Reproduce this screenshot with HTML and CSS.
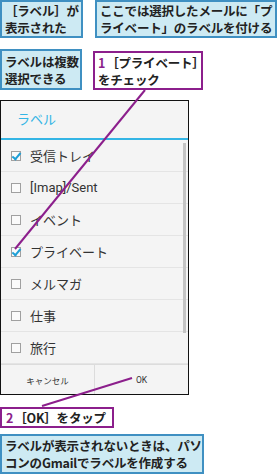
FILE: index.html
```html
<!DOCTYPE html>
<html lang="ja">
<head>
    <meta charset="UTF-8">
    <meta name="viewport" content="width=device-width, initial-scale=1.0">
    <title>ラベルを付ける</title>
    <link rel="stylesheet" href="styles.css">
</head>
<body>
    <div class="page">
        <div class="callout-row top-row">
            <div class="note note-blue note-a">［ラベル］が<br>表示された</div>
            <div class="note note-blue note-b">ここでは選択したメールに「プ<br>ライベート」のラベルを付ける</div>
        </div>

        <div class="callout-row second-row">
            <div class="note note-blue note-c">ラベルは複数<br>選択できる</div>
            <div class="note note-purple note-d"><span class="step">1</span>［プライベート］<br>をチェック</div>
        </div>

        <!-- phone screenshot -->
        <div class="dialog">
            <div class="dialog-title">ラベル</div>
            <div class="dialog-list">
                <div class="row"><span class="box checked"></span>受信トレイ</div>
                <div class="row"><span class="box"></span>[Imap]/Sent</div>
                <div class="row"><span class="box"></span>イベント</div>
                <div class="row"><span class="box checked"></span>プライベート</div>
                <div class="row"><span class="box"></span>メルマガ</div>
                <div class="row"><span class="box"></span>仕事</div>
                <div class="row"><span class="box"></span>旅行</div>
                <div class="scrollbar"></div>
            </div>
            <div class="dialog-buttons">
                <div class="btn">キャンセル</div>
                <div class="btn">OK</div>
            </div>
        </div>

        <div class="note note-purple note-e"><span class="step">2</span>［OK］をタップ</div>
        <div class="note note-blue note-f">ラベルが表示されないときは、パソ<br>コンのGmailでラベルを作成する</div>

        <svg class="leaders" width="277" height="475" viewBox="0 0 277 475">
            <line x1="145" y1="90" x2="15" y2="249" />
            <line x1="42" y1="406" x2="132" y2="378" />
        </svg>
    </div>
</body>
</html>
```

FILE: styles.css
```css
body {
    margin: 0;
    padding: 0;
    background: #fff;
    font-family: "Noto Sans CJK JP", "Noto Sans", sans-serif;
    color: #222;
}

.page {
    position: relative;
    width: 277px;
    height: 475px;
    overflow: hidden;
}

/* Callouts */
.callout-row {
    display: flex;
    align-items: flex-start;
}

.top-row {
    gap: 12px;
}

.second-row {
    margin-top: 11px;
    gap: 11px;
}

.note {
    box-sizing: border-box;
    font-size: 12.5px;
    font-weight: bold;
    line-height: 17px;
    white-space: nowrap;
    letter-spacing: -0.2px;
}

.note-blue {
    background-color: #cdeaf3;
    border: 2px solid #3f90c2;
    padding: 0 3px;
}

.note-purple {
    background-color: #fff;
    border: 2px solid #8c1f8c;
    padding: 0 3px;
}

.step {
    color: #8c1f8c;
    margin-right: 1px;
}

.note-a {
    width: 83px;
    height: 38px;
}

.note-b {
    width: 182px;
    height: 38px;
}

.note-c {
    width: 82px;
    height: 41px;
    padding-top: 2px;
}

.note-d {
    width: 110px;
    height: 39px;
    margin-top: 2px;
    padding-top: 1px;
}

.note-e {
    width: 114px;
    height: 21px;
    margin-top: 12px;
    padding: 0 4px;
}

.note-f {
    width: 204px;
    height: 40px;
    margin-top: 6px;
    padding-top: 1px;
}

/* Phone dialog */
.dialog {
    width: 189px;
    margin-top: 10px;
    border: 1px solid #111;
    box-sizing: border-box;
    background-color: #f4f4f4;
    font-family: Roboto, "Noto Sans CJK JP", sans-serif;
    color: #333;
}

.dialog-title {
    height: 37px;
    line-height: 37px;
    padding-left: 16px;
    font-size: 13px;
    color: #33b5e5;
    border-bottom: 2px solid #33b5e5;
}

.dialog-list {
    position: relative;
}

.row {
    display: flex;
    align-items: center;
    height: 31px;
    border-bottom: 1px solid #e4e4e4;
    font-size: 13px;
    padding-left: 10px;
}

.row:last-of-type {
    border-bottom: none;
    height: 32px;
}

.box {
    width: 8px;
    height: 8px;
    border: 1px solid #a0a0a0;
    background: #fafafa;
    margin-right: 9px;
    position: relative;
}

.box.checked::after {
    content: "";
    position: absolute;
    left: 2px;
    top: -1px;
    width: 3px;
    height: 7px;
    border-right: 2px solid #1e9fd6;
    border-bottom: 2px solid #1e9fd6;
    transform: rotate(40deg);
}

.scrollbar {
    position: absolute;
    right: 2px;
    top: 3px;
    width: 3px;
    height: 190px;
    background-color: #c4c4c4;
}

.dialog-buttons {
    display: flex;
    height: 29px;
    border-top: 1px solid #dcdcdc;
}

.btn {
    flex: 1;
    display: flex;
    align-items: center;
    justify-content: center;
    font-size: 8.5px;
    color: #333;
}

.btn + .btn {
    border-left: 1px solid #dcdcdc;
}

/* Leader lines */
.leaders {
    position: absolute;
    left: 0;
    top: 0;
    pointer-events: none;
}

.leaders line {
    stroke: #8c1f8c;
    stroke-width: 2;
}
```
